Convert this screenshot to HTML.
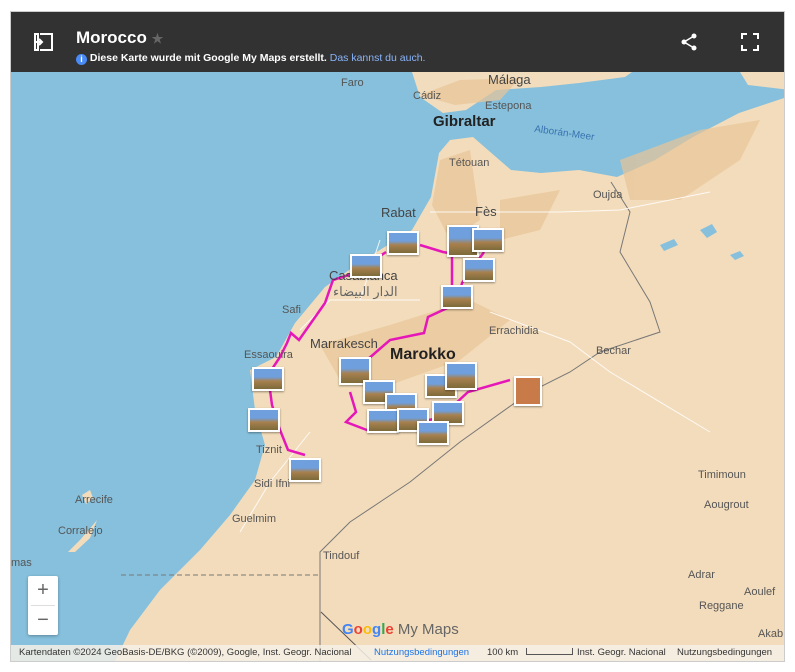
<!DOCTYPE html>
<html><head><meta charset="utf-8"><style>
body{margin:0;width:795px;height:672px;background:#fff;position:relative;overflow:hidden;font-family:"Liberation Sans",sans-serif}
#frame{position:absolute;left:11px;top:12px;width:773px;height:649px;outline:1px solid #ccc;overflow:hidden}
#hdr{position:absolute;left:0;top:0;width:773px;height:60px;background:#323232;color:#fff}
.t{position:absolute;font-size:11px;color:#555}
.ph{position:absolute;width:28px;height:20px;border:2px solid #fff;background:linear-gradient(#6f9fdc 40%,#a8804e 60%,#7d6a3a);box-shadow:0 1px 2px rgba(0,0,0,.4)}
</style></head><body>
<div id="frame">
<svg width="773" height="649" style="position:absolute;left:0;top:0">
<g transform="translate(-11,-12)">
<rect x="0" y="0" width="800" height="680" fill="#86c0dc"/>
<path d="M412,72 L420,97 L443,113 L466,110 L496,90 L541,87 L579,83 L625,77 L632,72 Z" fill="#f1dcbd"/>
<path d="M740,72 L748,85 L790,90 L790,72 Z" fill="#f1dcbd"/>
<path d="M790,96 L739,113 L693,137 L655,160 L617,177 L579,170 L541,173 L511,170 L496,157 L473,137 L450,140 L439,153 L431,197 L412,230 L359,263 L325,287 L295,323 L276,357 L250,370 L255,410 L265,445 L255,480 L230,515 L200,550 L160,590 L130,630 L110,672 L790,672 Z" fill="#f3dcbb"/>
<path d="M68,552 L80,540 L92,526 L97,520 L90,538 L75,552 Z" fill="#f3dcbb"/>
<path d="M82,495 L90,490 L93,498 L86,504 Z" fill="#f3dcbb"/>
<g fill="#e8c497" opacity=".7">
<path d="M440,160 L470,150 L480,220 L450,240 L432,205 Z"/>
<path d="M500,200 L560,190 L540,230 L500,240 Z"/>
<path d="M320,345 L390,325 L470,300 L510,320 L460,360 L390,385 L340,380 Z"/>
<path d="M620,160 L700,130 L760,120 L740,160 L680,200 L630,200 Z"/>
<path d="M420,95 L460,80 L520,78 L500,100 L455,105 Z"/>
</g>
<g fill="#86c0dc"><path d="M700,230 l12,-6 5,8 -10,6z"/><path d="M660,245 l14,-6 4,6 -14,6z"/><path d="M730,255 l10,-4 4,5 -9,4z"/></g>
<path d="M611,182 L630,212 L620,252 L650,302 L660,332 L600,352 L570,372 L530,392 L460,442 L410,482 L350,522 L320,552 L320,672" stroke="#777" stroke-width="1" fill="none"/>
<path d="M121,575 L321,575" stroke="#777" stroke-dasharray="5,3" fill="none"/>
<path d="M321,612 L371,660" stroke="#555" fill="none"/>
<g stroke="#fff" stroke-width="1" fill="none" opacity=".85">
<path d="M430,212 L490,212 L560,212 L620,210 L710,192"/>
<path d="M490,312 L570,342 L610,372 L710,432"/>
<path d="M310,432 L270,482 L240,532"/>
<path d="M360,300 L380,240 M300,330 L330,300 L360,300 L420,300"/>
</g>
<path d="M420,245 L443,252 L460,255 M484,252 L462,283 L458,303 L428,317 L424,333 L390,340 L367,360 M386,252 L355,273 L333,280 L325,303 L299,340 L291,333 L287,343 L280,357 L268,375 L272,405 L280,430 L288,450 L305,455 M350,392 L356,412 L346,422 L372,432 L400,425 L440,418 L468,392 L510,380" stroke="#e617b8" stroke-width="2.5" fill="none"/>
<path d="M452,252 L452,285" stroke="#e617b8" stroke-width="2.5"/>
</g>
</svg>
<div id="hdr">
<svg width="24" height="24" style="position:absolute;left:21px;top:18px" viewBox="0 0 24 24"><path d="M8,4 h12 v16 h-12 M3,4 h3 v16 h-3 z M3,12 h6 M7,9 l3,3 -3,3" stroke="#fff" stroke-width="2" fill="none"/></svg>
<div style="position:absolute;left:65px;top:16px;font-size:17px;font-weight:bold">Morocco <span style="color:#666;font-size:13px">★</span></div>
<div style="position:absolute;left:65px;top:40px;font-size:10.5px;font-weight:bold"><span style="display:inline-block;width:11px;height:11px;border-radius:50%;background:#4a8af4;text-align:center;font-size:9px;line-height:11px;vertical-align:-1px">i</span> Diese Karte wurde mit Google My Maps erstellt. <span style="color:#8ab4f8;font-weight:normal">Das kannst du auch.</span></div>
<svg width="20" height="20" style="position:absolute;left:668px;top:20px" viewBox="0 0 20 20"><circle cx="15" cy="4" r="2.5" fill="#fff"/><circle cx="5" cy="10" r="2.5" fill="#fff"/><circle cx="15" cy="16" r="2.5" fill="#fff"/><path d="M15,4 L5,10 L15,16" stroke="#fff" stroke-width="1.5" fill="none"/></svg>
<svg width="20" height="20" style="position:absolute;left:729px;top:20px" viewBox="0 0 20 20"><path d="M2,7 V2 H7 M13,2 H18 V7 M18,13 V18 H13 M7,18 H2 V13" stroke="#fff" stroke-width="2" fill="none"/></svg>
</div>
<div class="t" style="left:477px;top:60px;font-size:13px;color:#444">Málaga</div>
<div class="t" style="left:330px;top:65px">Faro</div>
<div class="t" style="left:402px;top:78px">Cádiz</div>
<div class="t" style="left:474px;top:88px">Estepona</div>
<div class="t" style="left:422px;top:101px;font-size:15px;font-weight:bold;color:#222">Gibraltar</div>
<div class="t" style="left:523px;top:116px;color:#3a73b0;font-size:10px;transform:rotate(8deg)">Alborán-Meer</div>
<div class="t" style="left:438px;top:145px">Tétouan</div>
<div class="t" style="left:582px;top:177px">Oujda</div>
<div class="t" style="left:370px;top:193px;font-size:13px;color:#444">Rabat</div>
<div class="t" style="left:464px;top:192px;font-size:13px;color:#444">Fès</div>
<div class="t" style="left:318px;top:256px;font-size:13px;color:#444">Casablanca</div>
<div class="t" style="left:322px;top:272px;font-size:13px;color:#666">الدار البيضاء</div>
<div class="t" style="left:271px;top:292px">Safi</div>
<div class="t" style="left:478px;top:313px">Errachidia</div>
<div class="t" style="left:299px;top:324px;font-size:13px;color:#444">Marrakesch</div>
<div class="t" style="left:379px;top:334px;font-size:16px;font-weight:bold;color:#222">Marokko</div>
<div class="t" style="left:585px;top:333px">Bechar</div>
<div class="t" style="left:233px;top:337px">Essaouira</div>
<div class="t" style="left:245px;top:432px">Tiznit</div>
<div class="t" style="left:243px;top:466px">Sidi Ifni</div>
<div class="t" style="left:64px;top:482px">Arrecife</div>
<div class="t" style="left:47px;top:513px">Corralejo</div>
<div class="t" style="left:221px;top:501px">Guelmim</div>
<div class="t" style="left:312px;top:538px">Tindouf</div>
<div class="t" style="left:687px;top:457px">Timimoun</div>
<div class="t" style="left:693px;top:487px">Aougrout</div>
<div class="t" style="left:677px;top:557px">Adrar</div>
<div class="t" style="left:733px;top:574px">Aoulef</div>
<div class="t" style="left:688px;top:588px">Reggane</div>
<div class="t" style="left:747px;top:616px">Akab</div>
<div class="t" style="left:0;top:545px">mas</div>
<div class="ph" style="left:376px;top:219px"></div><div class="ph" style="left:339px;top:242px"></div>
<div class="ph" style="left:436px;top:213px;height:28px"></div><div class="ph" style="left:461px;top:216px"></div>
<div class="ph" style="left:452px;top:246px"></div><div class="ph" style="left:430px;top:273px"></div>
<div class="ph" style="left:241px;top:355px"></div><div class="ph" style="left:237px;top:396px"></div>
<div class="ph" style="left:278px;top:446px"></div><div class="ph" style="left:328px;top:345px;height:24px"></div>
<div class="ph" style="left:352px;top:368px"></div><div class="ph" style="left:374px;top:381px"></div>
<div class="ph" style="left:414px;top:362px"></div><div class="ph" style="left:434px;top:350px;height:24px"></div>
<div class="ph" style="left:356px;top:397px"></div><div class="ph" style="left:386px;top:396px"></div>
<div class="ph" style="left:421px;top:389px"></div><div class="ph" style="left:406px;top:409px"></div>
<div class="ph" style="left:503px;top:364px;width:24px;height:26px;background:#c87a48"></div>
<div style="position:absolute;left:17px;top:564px;width:30px;height:59px;background:#fff;border-radius:2px;box-shadow:0 1px 3px rgba(0,0,0,.3);color:#666;font-size:20px;text-align:center;line-height:29px">+<div style="border-top:1px solid #ddd;margin:0 3px;line-height:28px">−</div></div>
<div style="position:absolute;left:331px;top:609px;font-size:15px;color:#666"><b><span style="color:#4285f4">G</span><span style="color:#ea4335">o</span><span style="color:#fbbc05">o</span><span style="color:#4285f4">g</span><span style="color:#34a853">l</span><span style="color:#ea4335">e</span></b> My Maps</div>
<div style="position:absolute;left:0;top:633px;width:773px;height:16px;background:rgba(245,240,230,.85);font-size:9.5px;color:#333;line-height:16px;white-space:nowrap">
<span style="position:absolute;left:8px">Kartendaten ©2024 GeoBasis-DE/BKG (©2009), Google, Inst. Geogr. Nacional</span>
<span style="position:absolute;left:363px;color:#1a73e8">Nutzungsbedingungen</span>
<span style="position:absolute;left:476px">100 km</span>
<span style="position:absolute;left:515px;top:3px;width:45px;height:6px;border:1px solid #555;border-top:none"></span>
<span style="position:absolute;left:566px">Inst. Geogr. Nacional</span>
<span style="position:absolute;left:666px">Nutzungsbedingungen</span>
</div>
</div>
</body></html>
